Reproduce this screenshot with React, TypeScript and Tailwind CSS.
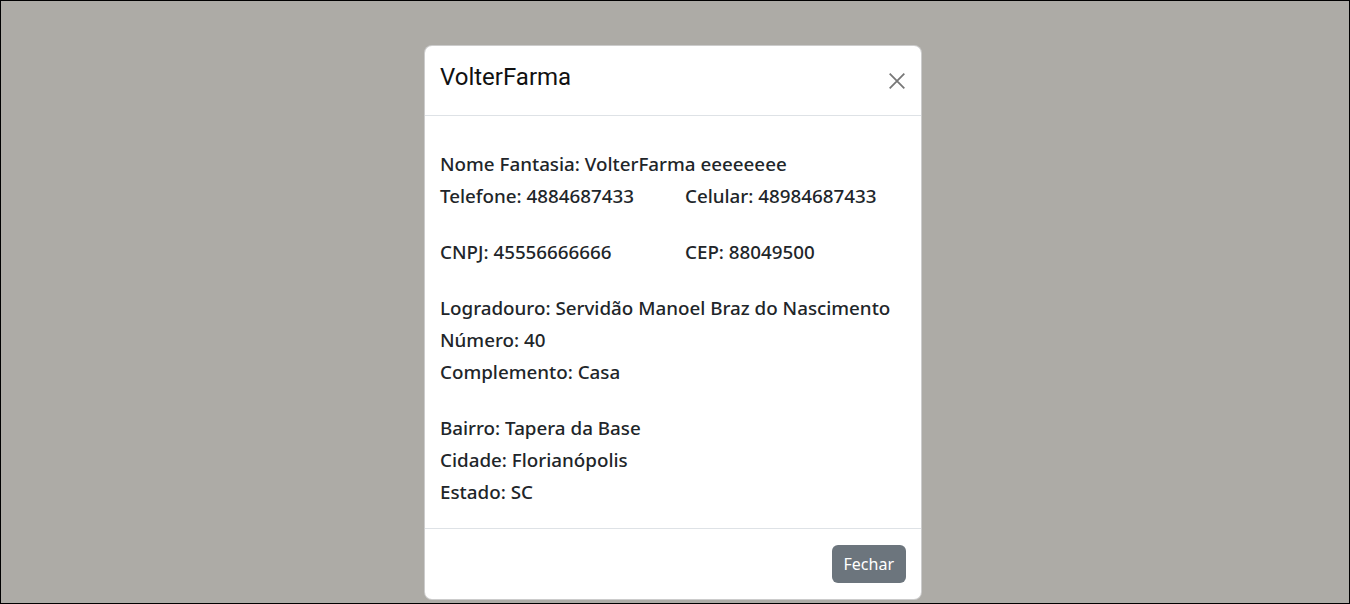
import React from 'react';

const rows: { cols: string[] }[][] = [
  [{ cols: ['Nome Fantasia: VolterFarma eeeeeeee'] }, { cols: ['Telefone: 4884687433', 'Celular: 48984687433'] }],
  [{ cols: ['CNPJ: 45556666666', 'CEP: 88049500'] }],
  [
    { cols: ['Logradouro: Servidão Manoel Braz do Nascimento'] },
    { cols: ['Número: 40'] },
    { cols: ['Complemento: Casa'] },
  ],
  [{ cols: ['Bairro: Tapera da Base'] }, { cols: ['Cidade: Florianópolis'] }, { cols: ['Estado: SC'] }],
];

const App: React.FC = () => {
  return (
    <div className="w-[1350px] h-[604px] bg-[#adaba6] border border-black flex justify-start items-start pl-[423px] pt-[44px] overflow-hidden">
      <div className="w-[498px] bg-white rounded-lg border border-black/20 flex flex-col">
        {/* header */}
        <div className="h-[70px] border-b border-[#dee2e6] flex items-start justify-between pl-[15px] pr-[14px]">
          <h5 className="mt-[15px] text-[24px] leading-[32px] text-[#111] font-['Roboto',sans-serif]">VolterFarma</h5>
          <button className="mt-[25px] w-5 h-5 flex items-center justify-center text-[#777]">
            <svg width="18" height="18" viewBox="0 0 16 16" fill="none" stroke="currentColor" strokeWidth="1.6">
              <path d="M1.5 1.5l13 13M14.5 1.5l-13 13" />
            </svg>
          </button>
        </div>

        {/* body */}
        <div className="pt-[32px] pb-[20px] px-[15px] flex flex-col gap-6 font-['Noto_Sans',sans-serif] text-[18.8px] font-medium text-[#212529]">
          {rows.map((group, gi) => (
            <div key={gi}>
              {group.map((row, ri) => (
                <div key={ri} className="grid grid-cols-[245px_1fr] leading-[32px] whitespace-nowrap">
                  {row.cols.map((c, ci) => (
                    <span key={ci}>{c}</span>
                  ))}
                </div>
              ))}
            </div>
          ))}
        </div>

        {/* footer */}
        <div className="h-[71px] border-t border-[#dee2e6] flex items-center justify-end pr-[15px]">
          <button className="h-[38px] px-3 rounded-md bg-[#6c757d] text-white text-[16px] font-['Noto_Sans',sans-serif]">
            Fechar
          </button>
        </div>
      </div>
    </div>
  );
};

export default App;
